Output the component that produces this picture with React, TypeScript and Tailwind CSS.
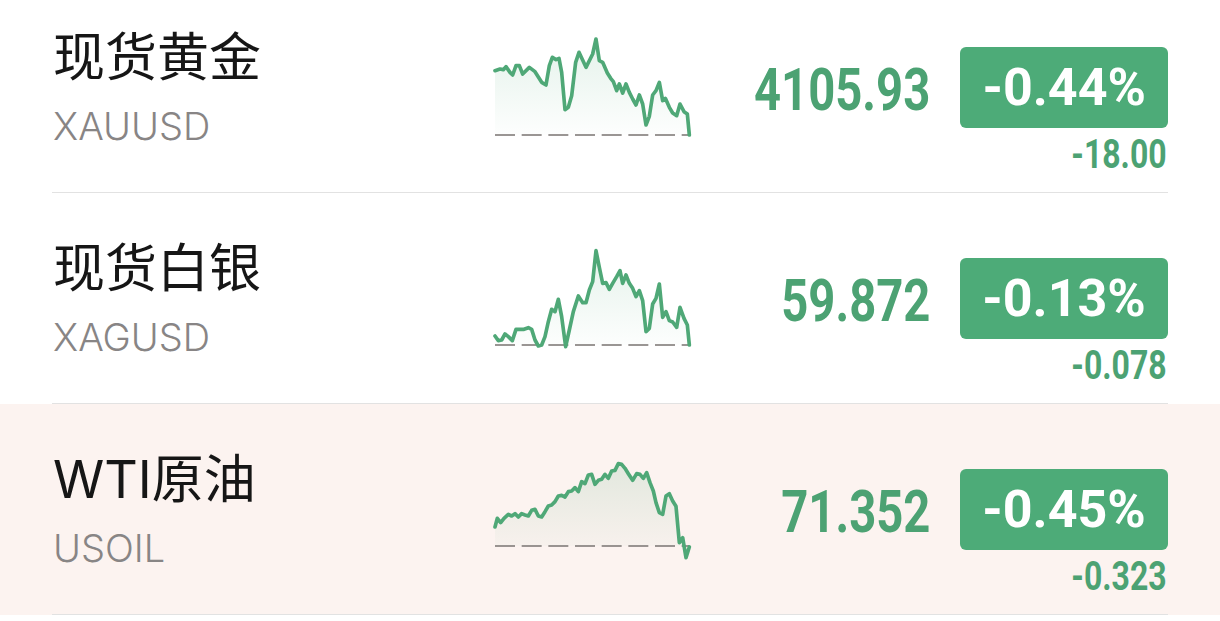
import React from 'react';

type Quote = {
    name: string;
    code: string;
    price: string;
    pct: string;
    change: string;
    base: number;
    points: number[][];
    highlight?: boolean;
};

// spark line coordinates live in a 690x390 box that is drawn at 230x130
const quotes: Quote[] = [
    {
        name: '现货黄金',
        code: 'XAUUSD',
        price: '4105.93',
        pct: '-0.44%',
        change: '-18.00',
        base: 348,
        points: [
            [45, 155], [60, 150], [70, 152], [78, 143], [90, 160], [98, 168], [108, 140], [118, 140],
            [128, 165], [148, 145], [165, 158], [185, 190], [198, 198], [208, 140], [217, 115], [228, 122],
            [237, 118], [245, 160], [255, 272], [265, 265], [275, 230], [287, 130], [297, 100], [318, 145],
            [338, 105], [348, 60], [358, 125], [368, 130], [382, 162], [392, 178], [400, 188], [410, 215],
            [418, 195], [428, 222], [438, 195], [448, 220], [458, 240], [468, 258], [478, 228], [488, 255],
            [498, 318], [508, 292], [518, 228], [528, 215], [538, 190], [548, 245], [556, 238], [568, 265],
            [578, 282], [590, 290], [600, 255], [612, 278], [622, 285], [628, 348],
        ],
    },
    {
        name: '现货白银',
        code: 'XAGUSD',
        price: '59.872',
        pct: '-0.13%',
        change: '-0.078',
        base: 345,
        points: [
            [45, 318], [55, 332], [65, 330], [75, 312], [85, 320], [97, 332], [108, 298], [122, 298],
            [132, 298], [145, 293], [155, 298], [165, 330], [175, 348], [185, 345], [195, 320], [205, 275],
            [215, 238], [225, 245], [235, 208], [245, 260], [257, 350], [268, 300], [280, 245], [295, 198],
            [308, 218], [318, 218], [328, 180], [338, 155], [348, 62], [358, 112], [368, 160], [378, 158],
            [388, 178], [398, 160], [410, 140], [420, 122], [428, 160], [438, 135], [448, 160], [458, 175],
            [468, 200], [478, 182], [488, 212], [498, 305], [508, 295], [518, 222], [528, 205], [538, 162],
            [548, 262], [558, 245], [568, 272], [578, 276], [590, 292], [600, 232], [612, 265], [622, 285],
            [628, 345],
        ],
    },
    {
        name: 'WTI原油',
        code: 'USOIL',
        price: '71.352',
        pct: '-0.45%',
        change: '-0.323',
        base: 315,
        highlight: true,
        points: [
            [45, 258], [52, 232], [62, 245], [72, 232], [85, 220], [95, 225], [105, 218], [115, 228],
            [125, 218], [135, 222], [145, 225], [155, 208], [165, 205], [175, 225], [185, 228], [195, 212],
            [205, 195], [215, 192], [225, 182], [235, 165], [245, 163], [255, 168], [265, 152], [275, 150],
            [285, 140], [295, 152], [305, 122], [315, 128], [325, 102], [335, 100], [345, 130], [355, 118],
            [365, 115], [375, 100], [385, 112], [395, 90], [405, 88], [415, 68], [425, 70], [435, 82],
            [445, 98], [458, 118], [470, 98], [480, 100], [490, 112], [500, 95], [510, 125], [520, 150],
            [528, 185], [538, 215], [548, 220], [558, 165], [568, 158], [578, 180], [588, 196], [598, 305],
            [608, 290], [618, 350], [628, 318],
        ],
    },
];

function Spark({id, points, base}: {id: string; points: number[][]; base: number}) {
    const line = points.map(p => p.join(',')).join(' ');
    const first = points[0][0];
    const last = points[points.length - 1][0];
    const area = `${line} ${last},${base} ${first},${base}`;

    return (
        <svg width="230" height="130" viewBox="0 0 690 390" className="shrink-0">
            <defs>
                <linearGradient id={id} x1="0" y1="0" x2="0" y2="1">
                    <stop offset="0%" stopColor="#4fa877" stopOpacity="0.15"/>
                    <stop offset="100%" stopColor="#4fa877" stopOpacity="0.01"/>
                </linearGradient>
            </defs>
            <polygon points={area} fill={`url(#${id})`}/>
            <line x1={first} y1={base} x2={last} y2={base} stroke="#7a7472" strokeWidth="5"
                  strokeDasharray="60 20"/>
            <polyline points={line} fill="none" stroke="#4fa877" strokeWidth="11"
                      strokeLinejoin="round" strokeLinecap="round"/>
        </svg>
    );
}

function QuoteRow({q, idx}: {q: Quote; idx: number}) {
    return (
        <div className={q.highlight ? 'bg-[#fcf3f0]' : 'bg-white'}>
            <div className="mx-[52px] flex h-[211px] items-start border-b border-[#e2e2e2]">
                <div className="mt-[50px] w-[428px] shrink-0 pl-px">
                    <div className="text-[52px] leading-[52px] text-[#161616] font-['Inter','Noto_Sans_CJK_SC',sans-serif]">
                        {q.name}
                    </div>
                    <div className="mt-[22px] text-[38px] leading-[40px] font-light text-[#888585] font-['Inter',sans-serif]">
                        {q.code}
                    </div>
                </div>

                <div className="mt-[37px]">
                    <Spark id={`spark-${idx}`} points={q.points} base={q.base}/>
                </div>

                {/* narrow figures: Roboto squeezed sideways */}
                <div className="mt-[65px] flex flex-1 flex-col items-end font-['Roboto',sans-serif] font-bold">
                    <div className="flex items-center gap-[30px]">
                        <span className="mt-[3px] inline-block origin-right scale-x-[0.8] text-[59px] leading-[59px] text-[#4ca273]">
                            {q.price}
                        </span>
                        <span className="flex h-[81px] w-[208px] items-center justify-center rounded-[6px] bg-[#4dab78] text-[52px] leading-[52px] text-white">
                            {q.pct}
                        </span>
                    </div>
                    <span className="mt-[6px] inline-block origin-right scale-x-[0.78] pr-[2px] text-[41px] leading-[41px] text-[#4ca273]">
                        {q.change}
                    </span>
                </div>
            </div>
        </div>
    );
}

export default function App() {
    return (
        <div className="h-[621px] w-[1220px] overflow-hidden bg-white">
            <div className="-mt-[18px]">
                {quotes.map((q, i) => (
                    <QuoteRow key={q.code} q={q} idx={i}/>
                ))}
            </div>
        </div>
    );
}
